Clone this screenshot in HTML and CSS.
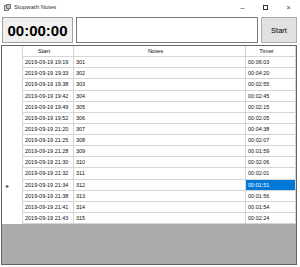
FILE: index.html
```html
<!DOCTYPE html>
<html lang="en">
<head>
    <meta charset="UTF-8">
    <title>Stopwath Notes</title>
    <link rel="stylesheet" href="styles.css">
</head>
<body>
<div class="window">
    <div class="title-bar">
        <svg class="app-icon" width="7" height="7" viewBox="0 0 7 7">
            <rect x="0.5" y="1.5" width="4" height="5" fill="#d8d8d8" stroke="#777"/>
            <rect x="2.5" y="0.5" width="4" height="4" fill="#bdbdbd" stroke="#777"/>
        </svg>
        <span class="title">Stopwath Notes</span>
        <div class="controls">
            <span class="ctl">&#8211;</span>
            <span class="ctl"><span class="max-box"></span></span>
            <span class="ctl close">&#215;</span>
        </div>
    </div>

    <div class="toolbar">
        <div class="timer-box">00:00:00</div>
        <div class="note-input"></div>
        <button type="button" class="start-btn">Start</button>
    </div>

    <div class="grid">
        <div class="grid-rows" id="grid-rows">
            <div class="cell corner"></div>
            <div class="cell head">Start</div>
            <div class="cell head">Notes</div>
            <div class="cell head">Timer</div>
        </div>
    </div>
</div>

<script>
    const notes = [
        ["2019-09-19 19:19", "301", "00:06:03"],
        ["2019-09-19 19:33", "302", "00:04:20"],
        ["2019-09-19 19:38", "303", "00:02:55"],
        ["2019-09-19 19:42", "304", "00:02:45"],
        ["2019-09-19 19:49", "305", "00:02:15"],
        ["2019-09-19 19:52", "306", "00:02:05"],
        ["2019-09-19 21:20", "307", "00:04:38"],
        ["2019-09-19 21:25", "308", "00:02:07"],
        ["2019-09-19 21:28", "309", "00:01:59"],
        ["2019-09-19 21:30", "310", "00:02:06"],
        ["2019-09-19 21:32", "311", "00:02:01"],
        ["2019-09-19 21:34", "312", "00:01:51"],
        ["2019-09-19 21:38", "313", "00:01:56"],
        ["2019-09-19 21:41", "314", "00:01:54"],
        ["2019-09-19 21:43", "315", "00:02:24"]
    ];
    const currentRow = 11;
    const rows = document.getElementById("grid-rows");

    notes.forEach((note, i) => {
        const marker = document.createElement("div");
        marker.className = "cell row-head";
        if (i === currentRow) {
            marker.textContent = "\u25B8";
        }
        rows.appendChild(marker);

        note.forEach((value, col) => {
            const cell = document.createElement("div");
            cell.className = "cell";
            if (i === currentRow && col === 2) {
                cell.classList.add("selected");
            }
            cell.textContent = value;
            rows.appendChild(cell);
        });
    });
</script>
</body>
</html>
```

FILE: styles.css
```css
body {
    margin: 0;
    font-family: "Liberation Sans", Arial, sans-serif;
    background: #1e1e3c;
}

.window {
    width: 300px;
    height: 267px;
    background: #ffffff;
    box-sizing: border-box;
    overflow: hidden;
}

.title-bar {
    height: 14px;
    display: flex;
    align-items: center;
    padding-left: 4px;
    gap: 3px;
}

.title {
    font-size: 6px;
    color: #333;
}

.controls {
    margin-left: auto;
    display: flex;
}

.ctl {
    width: 23px;
    display: flex;
    justify-content: center;
    align-items: center;
    font-size: 7px;
    color: #333;
}

.max-box {
    width: 5px;
    height: 5px;
    border: 1px solid #333;
    box-sizing: border-box;
}

.toolbar {
    display: flex;
    height: 26px;
    margin-top: 3px;
    padding-left: 2px;
    gap: 3px;
}

.timer-box {
    width: 71px;
    background: #f0f0f0;
    border: 1px solid #a0a0a0;
    box-sizing: border-box;
    display: flex;
    align-items: center;
    justify-content: center;
    font-size: 15px;
    font-weight: bold;
    color: #000;
}

.note-input {
    width: 182px;
    background: #fff;
    border: 1px solid #7a7a7a;
    box-sizing: border-box;
}

.start-btn {
    width: 36px;
    padding: 0;
    background: #e1e1e1;
    border: 1px solid #adadad;
    font-family: "Liberation Sans", Arial, sans-serif;
    font-size: 7.5px;
    color: #000;
}

/* Data grid */
.grid {
    margin: 2px 0 0 1px;
    width: 296px;
    height: 220px;
    background: #ababab;
    border: 1px solid #646464;
    box-sizing: border-box;
}

.grid-rows {
    display: grid;
    grid-template-columns: 21px 51px 172px 50px;
    grid-auto-rows: 11.13px;
    background: #fff;
}

.cell {
    font-size: 5.5px;
    color: #111;
    border-right: 1px solid #d5d5d5;
    border-bottom: 1px solid #d5d5d5;
    box-sizing: border-box;
    display: flex;
    align-items: center;
    padding-left: 2px;
    white-space: nowrap;
    overflow: hidden;
}

.head {
    justify-content: center;
    padding: 0 8px 0 0;
    font-size: 5.8px;
}

.row-head,
.corner {
    border-bottom: none;
    padding-left: 4px;
    font-size: 6px;
    color: #333;
}

.selected {
    background: #0078d7;
    color: #fff;
}
```
